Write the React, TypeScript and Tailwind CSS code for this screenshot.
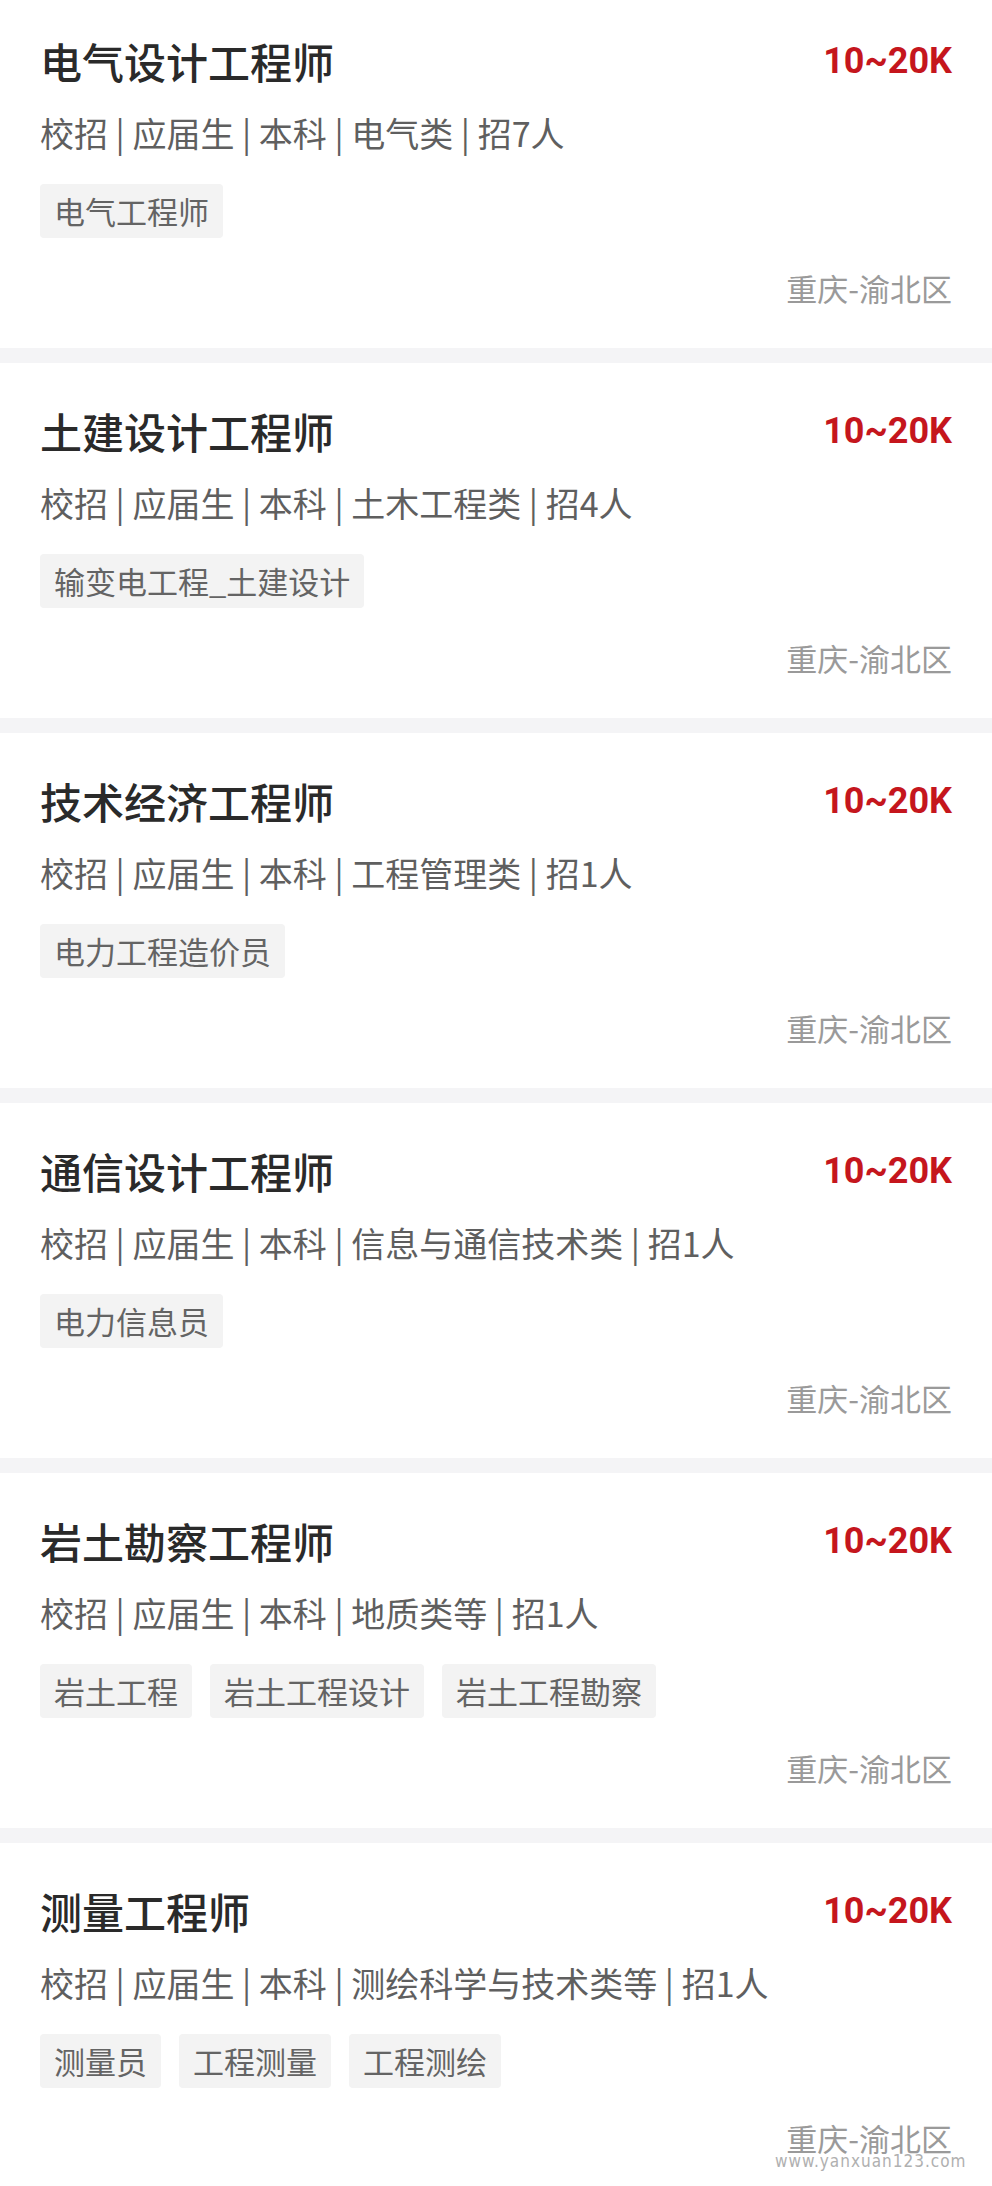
import React from 'react';

type Job = {
  title: string;
  major: string;
  count: number;
  tags: string[];
};

const jobs: Job[] = [
  { title: '电气设计工程师', major: '电气类', count: 7, tags: ['电气工程师'] },
  { title: '土建设计工程师', major: '土木工程类', count: 4, tags: ['输变电工程_土建设计'] },
  { title: '技术经济工程师', major: '工程管理类', count: 1, tags: ['电力工程造价员'] },
  { title: '通信设计工程师', major: '信息与通信技术类', count: 1, tags: ['电力信息员'] },
  { title: '岩土勘察工程师', major: '地质类等', count: 1, tags: ['岩土工程', '岩土工程设计', '岩土工程勘察'] },
  { title: '测量工程师', major: '测绘科学与技术类等', count: 1, tags: ['测量员', '工程测量', '工程测绘'] },
];

const cjk = "font-['Noto_Sans_CJK_SC','Noto_Sans',sans-serif]";

const JobCard: React.FC<{ job: Job }> = ({ job }) => {
  const meta = ['校招', '应届生', '本科', job.major, `招${job.count}人`].join(' | ');
  return (
    <div className="h-[355px] bg-white px-[40px] pt-[43px]">
      <div className="flex h-[50px] items-center justify-between">
        <h3 className={`${cjk} text-[42px] font-medium leading-[50px] text-[#2a2a2a]`}>{job.title}</h3>
        <span className="font-['Roboto',sans-serif] text-[36px] font-bold leading-[50px] text-[#c5161d]">
          10~20K
        </span>
      </div>
      <p className={`${cjk} mt-[27px] text-[34px] leading-[40px] text-[#5f5f5f]`}>{meta}</p>
      <div className="mt-[31px] flex gap-[18px]">
        {job.tags.map((t) => (
          <span
            key={t}
            className={`${cjk} flex h-[54px] items-center rounded-[4px] bg-[#f3f3f3] px-[14px] text-[31px] text-[#646464]`}
          >
            {t}
          </span>
        ))}
      </div>
      <div className={`${cjk} mt-[30px] text-right text-[31px] leading-[40px] text-[#9a9a9a]`}>重庆-渝北区</div>
    </div>
  );
};

export default function App() {
  return (
    <div className="relative h-[2186px] w-[992px] overflow-hidden bg-white">
      <div className="-mt-[7px] flex flex-col gap-[15px] bg-[#f4f4f6]">
        {jobs.map((job) => (
          <JobCard key={job.title} job={job} />
        ))}
      </div>
      <span className="absolute left-[775px] top-[2153px] font-['DejaVu_Sans_Condensed','Liberation_Sans',sans-serif] text-[17px] leading-none tracking-[1px] text-[#b0b0b0]">
        www.yanxuan123.com
      </span>
    </div>
  );
}
